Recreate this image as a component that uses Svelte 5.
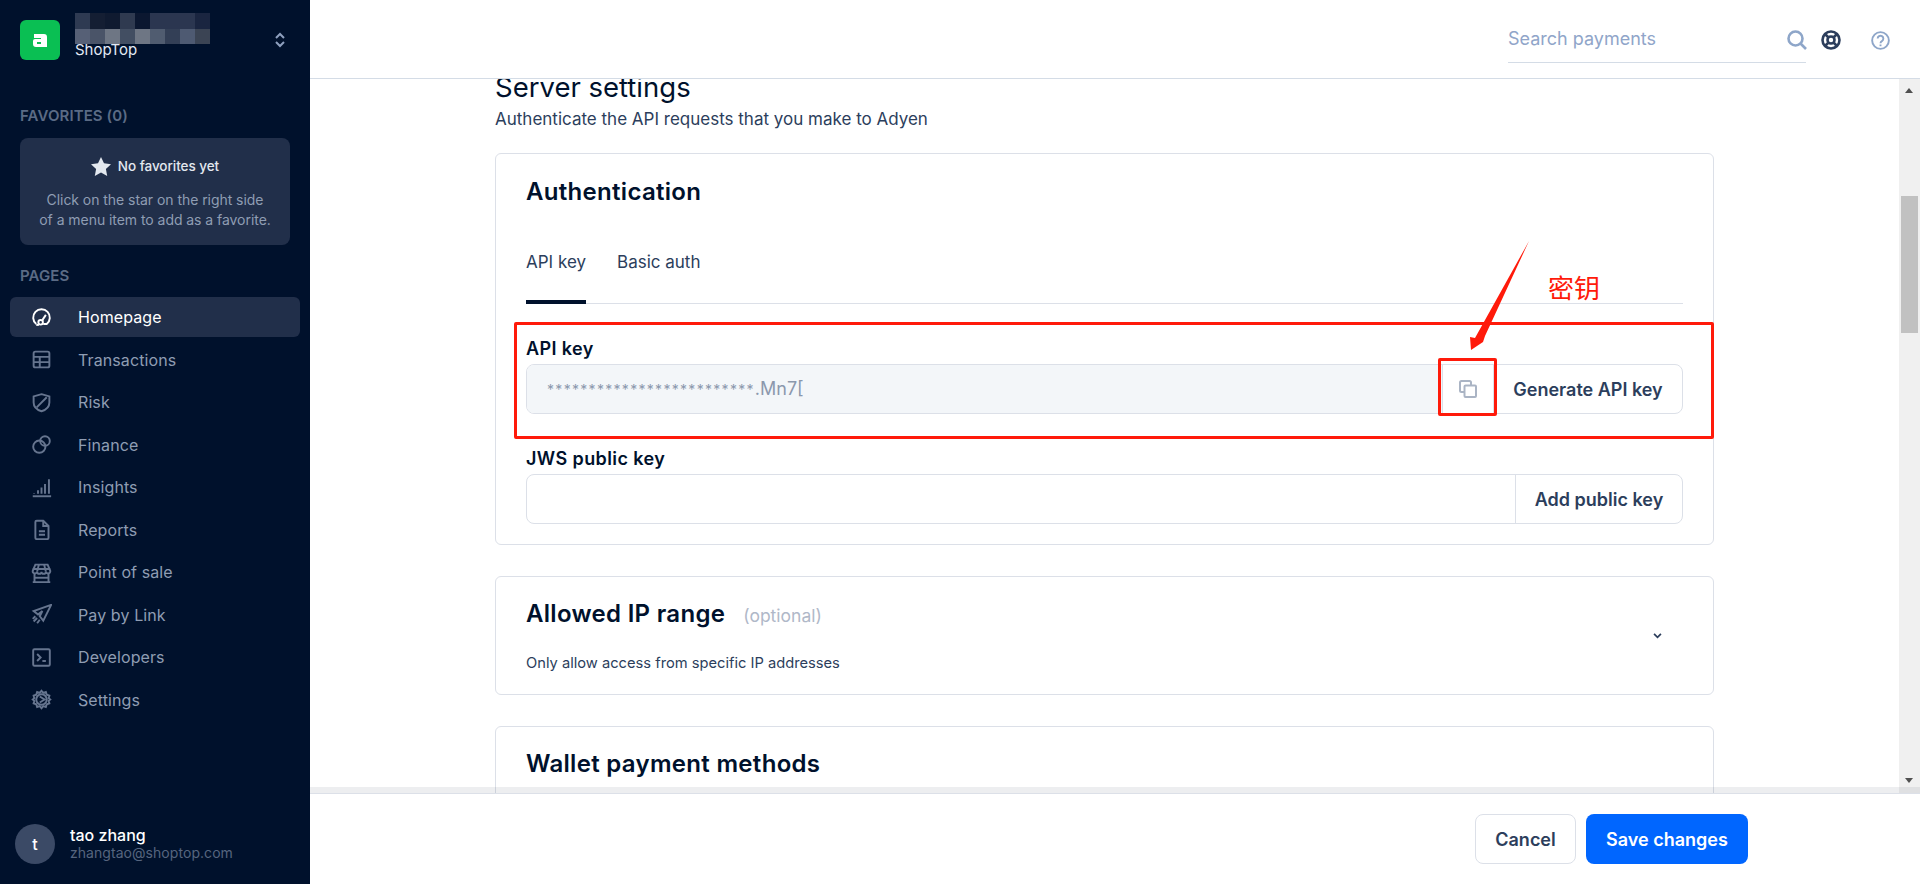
<script>
    const blurRows = [
        ['#2e3a52', '#141e33', '#0f1a30', '#2f3a50', '#0b1730', '#2b3650', '#2b3650', '#2b3650', '#1a2540'],
        ['#566076', '#4a5468', '#6e7684', '#424e62', '#6e7684', '#505c70', '#333f56', '#4e5a72', '#3b4454']
    ];

    const pages = [
        { label: 'Homepage', active: true, paths: ['M6 19.500A9.500 9.500 0 1 1 18 19.500H14', 'M9 20.500H6', 'M13 15l4-6'], dots: [[11, 17.500, 2.600]] },
        { label: 'Transactions', paths: ['M5 3h14a2 2 0 0 1 2 2v14a2 2 0 0 1-2 2H5a2 2 0 0 1-2-2V5a2 2 0 0 1 2-2z', 'M3 9h18M3 15h18M10 9v12'] },
        { label: 'Risk', paths: ['M12 2.500l9 2.500v7c0 5-4 8.500-9 10-5-1.500-9-5-9-10V5z', 'M6.500 17.500L18 6'] },
        { label: 'Finance', paths: [], dots: [[9.500, 14.500, 7], [16, 8, 5.500]] },
        { label: 'Insights', paths: ['M2 22h21', 'M3.500 19v-.5M8 19v-4M12 19v-7M16 19V8M20.500 19V2.500'] },
        { label: 'Reports', paths: ['M5 3.500A1.500 1.500 0 0 1 6.500 2H14l6 6v13.500a1.500 1.500 0 0 1-1.500 1.500h-12A1.500 1.500 0 0 1 5 21.500z', 'M14 2v6h6', 'M9 14h7M9 18h7'] },
        { label: 'Point of sale', paths: ['M5 3h14l3 7a2.500 2.500 0 0 1-5 1 2.500 2.500 0 0 1-5 0 2.500 2.500 0 0 1-5 0 2.500 2.500 0 0 1-5-1z', 'M9 3L7 11M15 3l2 8M2 8h20', 'M4 13v10M20 13v10M2 23h20', 'M4 18h16'] },
        { label: 'Pay by Link', paths: ['M23 1L3 8l5 4 5-4-3 6 4 5z', 'M7 16l-4 4M5 14l-3 3M10 18l-3 4'] },
        { label: 'Developers', paths: ['M4 2.500h16a1.500 1.500 0 0 1 1.500 1.500v16a1.500 1.500 0 0 1-1.500 1.500H4A1.500 1.500 0 0 1 2.500 20V4A1.500 1.500 0 0 1 4 2.500z', 'M7 8l4 4-4 4', 'M13 16h4'] },
        { label: 'Settings', paths: ['M12 2l2 2.500 3-1 1 3 3 1-.8 3L22 12l-1.800 1.500.8 3-3 1-1 3-3-1L12 22l-2-2.500-3 1-1-3-3-1 .8-3L2 12l1.800-1.500-.8-3 3-1 1-3 3 1z', 'M10 8.500l5.500 3.500-5.500 3.500'], dots: [[12, 12, 6]] }
    ];
</script>

<div class="page">
    <aside class="sidebar">
        <div class="account">
            <div class="logo">
                <svg viewBox="0 0 14 13" width="14" height="13"><path fill="#fff" fill-rule="evenodd" d="M1 0h10a3 3 0 0 1 3 3v10H3a3 3 0 0 1-3-3V7a2 2 0 0 1 2-2h6V4H1zM4 8v2h4V8z" /></svg>
            </div>
            <div class="account__text">
                <div class="blur">
                    {#each blurRows as row}
                        <div class="blur__row">
                            {#each row as c}
                                <span style="background:{c}"></span>
                            {/each}
                        </div>
                    {/each}
                </div>
                <div class="account__name">ShopTop</div>
            </div>
            <svg class="updown" viewBox="0 0 12 16" width="12" height="16" fill="none" stroke="#8ea0bf" stroke-width="2"><path d="M2 6l4-4 4 4M2 10l4 4 4-4" /></svg>
        </div>

        <div class="heading">FAVORITES (0)</div>
        <div class="favs">
            <div class="favs__title">
                <svg viewBox="0 0 20 19" width="20" height="19"><path fill="#e3e8ef" d="M10 0l3 6.300 7 .9-5.100 4.800 1.300 7L10 15.600 3.800 19l1.300-7L0 7.200l7-.9z" /></svg>
                No favorites yet
            </div>
            <p>Click on the star on the right side<br />of a menu item to add as a favorite.</p>
        </div>

        <div class="heading heading_pages">PAGES</div>
        <nav class="nav">
            {#each pages as page}
                <div class="nav__item" class:nav__item_active={page.active}>
                    <svg class="nav__icon" viewBox="0 0 24 24" width="21" height="21" fill="none" stroke="currentColor" stroke-width="2.200">
                        {#each page.paths as d}
                            <path {d} />
                        {/each}
                        {#each page.dots || [] as dot}
                            <circle cx={dot[0]} cy={dot[1]} r={dot[2]} />
                        {/each}
                    </svg>
                    {page.label}
                </div>
            {/each}
        </nav>

        <div class="user">
            <div class="avatar">t</div>
            <div>
                <div class="user__name">tao zhang</div>
                <div class="user__mail">zhangtao@shoptop.com</div>
            </div>
        </div>
    </aside>

    <div class="main">
        <header class="topbar">
            <div class="search">
                <span>Search payments</span>
                <svg viewBox="0 0 20 20" width="20" height="20" fill="none" stroke="#8ea6c9" stroke-width="2.600"><circle cx="8.500" cy="8.500" r="7" /><path d="M13.500 13.500l5.500 5.500" /></svg>
            </div>
            <svg class="lifebuoy" viewBox="0 0 20 20" width="20" height="20" fill="none" stroke="#2c3e5c" stroke-width="2.600"><circle cx="10" cy="10" r="8.500" /><circle cx="10" cy="10" r="3.500" /><path d="M4 4l3.500 3.500M16 4l-3.500 3.500M4 16l3.500-3.500M16 16l-3.500-3.500" /></svg>
            <svg class="help" viewBox="0 0 20 20" width="19" height="19" fill="none" stroke="#8ea6c9" stroke-width="2"><circle cx="10" cy="10" r="8.800" /><path d="M7 8a3 3 0 1 1 4.500 2.600c-1 .6-1.500 1-1.500 2.200" /><path d="M10 14.200v1.800" /></svg>
        </header>

        <div class="content">
            <div class="scroll">
                <h1>Server settings</h1>
                <p class="subtitle">Authenticate the API requests that you make to Adyen</p>

                <section class="card card_auth">
                    <h2>Authentication</h2>
                    <div class="tabs">
                        <div class="tab tab_active">API key</div>
                        <div class="tab">Basic auth</div>
                    </div>
                    <label class="field__label" for="api-key">API key</label>
                    <div class="field">
                        <div id="api-key" class="field__input field__input_disabled"><span class="stars">*************************</span>.Mn7[</div>
                        <div class="field__btn field__btn_icon">
                            <svg viewBox="0 0 18 18" width="18" height="18" fill="none" stroke="#aab4c4" stroke-width="2"><path d="M5 12H2.500A1.500 1.500 0 0 1 1 10.500V2.500A1.500 1.500 0 0 1 2.500 1h8A1.500 1.500 0 0 1 12 2.500V5" /><rect x="5.500" y="5.500" width="11.500" height="11.500" rx="1" /></svg>
                        </div>
                        <div class="field__btn field__btn_generate">Generate API key</div>
                    </div>
                    <label class="field__label field__label_jws" for="jws-key">JWS public key</label>
                    <div class="field">
                        <div id="jws-key" class="field__input"></div>
                        <div class="field__btn field__btn_add">Add public key</div>
                    </div>
                </section>

                <section class="card card_ip">
                    <div class="card__head">
                        <h2>Allowed IP range</h2>
                        <span class="optional">(optional)</span>
                    </div>
                    <p class="hint">Only allow access from specific IP addresses</p>
                    <svg class="chevron" viewBox="0 0 10 7" width="9" height="6" fill="none" stroke="#2c3e5c" stroke-width="2"><path d="M1 1l4 4 4-4" /></svg>
                </section>

                <section class="card card_wallet">
                    <h2>Wallet payment methods</h2>
                </section>
            </div>
            <div class="scrollbar">
                <span class="arrow arrow_up"></span>
                <span class="thumb"></span>
                <span class="arrow arrow_down"></span>
            </div>
            <div class="edge"></div>
        </div>

        <footer class="footer">
            <div class="btn">Cancel</div>
            <div class="btn btn_primary">Save changes</div>
        </footer>
    </div>

    <!-- red marks drawn on top of the screenshot -->
    <div class="mark mark_big"></div>
    <div class="mark mark_small"></div>
    <svg class="mark__arrow" viewBox="0 0 70 115" width="70" height="115"><path fill="#ff1a0a" d="M64 1L20 96l-2 6L6 110 5 97l5 1z" /></svg>
    <div class="mark__label">密钥</div>
</div>

<style>
    :global(body) {
        margin: 0;
        background: #fff;
    }
    * {
        box-sizing: border-box;
    }
    .page {
        position: relative;
        display: flex;
        height: 884px;
        overflow: hidden;
        font-family: Inter, "Noto Sans CJK SC", sans-serif;
        font-size: 16px;
        color: #00112c;
    }
    .sidebar {
        display: flex;
        flex-direction: column;
        flex: none;
        width: 310px;
        background: #00112c;
        color: #8f9db3;
    }
    .account {
        display: flex;
        align-items: flex-start;
        height: 100px;
        padding: 20px 24px 0 20px;
    }
    .logo {
        display: flex;
        align-items: center;
        justify-content: center;
        flex: none;
        width: 40px;
        height: 40px;
        border-radius: 6px;
        background: #0abf53;
    }
    .account__text {
        flex: 1;
        margin: -7px 0 0 15px;
    }
    .blur__row {
        display: flex;
        height: 15.500px;
    }
    .blur__row span {
        width: 15px;
    }
    .account__name {
        margin-top: -3px;
        font-size: 15px;
        line-height: 17px;
        color: #e3eaf5;
    }
    .updown {
        margin-top: 12px;
    }
    .heading {
        height: 38px;
        padding: 7px 0 0 20px;
        font-size: 15px;
        line-height: 17px;
        font-weight: 600;
        letter-spacing: .1px;
        color: #5b6b85;
    }
    .heading_pages {
        height: 30px;
        padding-top: 0;
    }
    .favs {
        height: 107px;
        margin: 0 20px 22px;
        padding-top: 18px;
        border-radius: 8px;
        background: #212f4a;
        text-align: center;
        font-size: 14px;
        letter-spacing: -.05px;
    }
    .favs__title {
        display: flex;
        align-items: center;
        justify-content: center;
        gap: 7px;
        height: 20px;
        font-size: 13.500px;
        font-weight: 500;
        color: #e3e8ef;
    }
    .favs p {
        margin: 14px 0 0;
        line-height: 20px;
    }
    .nav {
        display: flex;
        flex-direction: column;
        gap: 2.500px;
        margin: 0 10px;
    }
    .nav__item {
        display: flex;
        align-items: center;
        height: 40px;
        padding-left: 21px;
        border-radius: 6px;
        letter-spacing: .1px;
    }
    .nav__icon {
        flex: none;
        margin-right: 26px;
        color: #66758f;
    }
    .nav__item_active {
        background: #212f4a;
        color: #fff;
    }
    .nav__item_active .nav__icon {
        color: #fff;
    }
    .user {
        display: flex;
        align-items: center;
        gap: 15px;
        margin-top: auto;
        padding: 0 0 20px 15px;
    }
    .avatar {
        display: flex;
        align-items: center;
        justify-content: center;
        width: 40px;
        height: 40px;
        border-radius: 50%;
        background: #3b4a66;
        color: #fff;
        font-weight: 500;
    }
    .user__name {
        font-size: 16px;
        line-height: 18px;
        font-weight: 500;
        color: #fff;
    }
    .user__mail {
        font-size: 14px;
        line-height: 18px;
        letter-spacing: .05px;
        color: #56657f;
    }
    .main {
        display: flex;
        flex-direction: column;
        flex: 1;
        min-width: 0;
    }
    .topbar {
        display: flex;
        align-items: flex-start;
        flex: none;
        height: 79px;
        padding: 29px 30px 0 0;
        border-bottom: 1px solid #d4dce6;
    }
    .search {
        display: flex;
        justify-content: space-between;
        width: 298px;
        height: 34px;
        margin-left: auto;
        border-bottom: 1px solid #d4dce6;
        font-size: 18px;
        color: #90a5c9;
    }
    .search span {
        line-height: 20px;
    }
    .search svg {
        margin: 1px -1px 0 0;
    }
    .lifebuoy {
        margin: 1px 0 0 15px;
    }
    .help {
        margin: 2px 0 0 30px;
    }
    .content {
        position: relative;
        display: flex;
        flex: 1;
        min-height: 0;
        overflow: hidden;
    }
    .scroll {
        flex: 1;
        min-width: 0;
        margin-top: -8px;
        padding: 0 185px 0 185px;
    }
    h1 {
        margin: 0;
        font-size: 27.500px;
        line-height: 32px;
        font-weight: 400;
    }
    .subtitle {
        margin: 6px 0 24px;
        font-size: 17px;
        line-height: 20px;
        color: #2c3e5c;
    }
    .card {
        position: relative;
        margin-bottom: 31px;
        padding: 0 30px;
        border: 1px solid #dce0e8;
        border-radius: 6px;
    }
    .card_auth {
        height: 392px;
        padding-top: 24px;
    }
    .card_ip {
        height: 119px;
        padding-top: 23px;
    }
    .card_wallet {
        height: 120px;
        padding-top: 23px;
    }
    h2 {
        margin: 0;
        font-size: 24px;
        line-height: 28px;
        font-weight: 600;
        letter-spacing: .3px;
    }
    .tabs {
        display: flex;
        gap: 31px;
        height: 68px;
        margin-top: 30px;
        padding-top: 16px;
        border-bottom: 1px solid #dce0e8;
    }
    .tab {
        height: 52px;
        font-size: 17px;
        line-height: 20px;
        color: #2c3e5c;
    }
    .tab_active {
        border-bottom: 4px solid #00112c;
    }
    .field__label {
        display: block;
        margin-top: 35px;
        font-size: 18px;
        font-weight: 600;
        line-height: 20px;
        letter-spacing: .4px;
    }
    .field {
        display: flex;
        height: 50px;
        margin-top: 5px;
        border: 1px solid #dce0e8;
        border-radius: 8px;
        overflow: hidden;
    }
    .field__input {
        flex: 1;
        padding: 0 20px;
        line-height: 48px;
    }
    .field__input_disabled {
        background: #f3f6f9;
        color: #8b98ad;
        font-size: 18px;
    }
    .stars {
        font-size: 14px;
        letter-spacing: 1.300px;
    }
    .field__btn {
        display: flex;
        align-items: center;
        justify-content: center;
        flex: none;
        border-left: 1px solid #dce0e8;
        font-size: 18px;
        font-weight: 600;
        color: #2c3e5c;
    }
    .field__btn_icon {
        width: 51px;
    }
    .field__btn_generate {
        width: 189px;
    }
    .field__btn_add {
        width: 167px;
    }
    .card__head {
        display: flex;
        align-items: baseline;
        gap: 18px;
    }
    .optional {
        font-size: 17.500px;
        color: #b0b8c8;
    }
    .hint {
        margin: 25px 0 0;
        font-size: 14.700px;
        line-height: 20px;
        color: #2c3e5c;
    }
    .chevron {
        position: absolute;
        top: 56px;
        right: 51px;
    }
    .scrollbar {
        position: relative;
        flex: none;
        width: 21px;
        background: #f0f0f0;
    }
    .thumb {
        position: absolute;
        top: 117px;
        left: 2px;
        width: 17px;
        height: 137px;
        background: #c1c1c1;
    }
    .arrow {
        position: absolute;
        left: 6px;
        border-left: 4.500px solid transparent;
        border-right: 4.500px solid transparent;
    }
    .arrow_up {
        top: 9px;
        border-bottom: 5px solid #505050;
    }
    .arrow_down {
        bottom: 10px;
        border-top: 5px solid #505050;
    }
    .edge {
        position: absolute;
        left: 0;
        right: 0;
        bottom: 0;
        height: 6px;
        background: rgba(0, 17, 44, .07);
    }
    .footer {
        display: flex;
        justify-content: flex-end;
        gap: 10px;
        flex: none;
        height: 91px;
        padding: 20px 172px 0 0;
        border-top: 1px solid #dce0e8;
    }
    .btn {
        display: flex;
        align-items: center;
        justify-content: center;
        width: 101px;
        height: 50px;
        border: 1px solid #dce0e8;
        border-radius: 8px;
        font-size: 18px;
        font-weight: 600;
        color: #2c3e5c;
    }
    .btn_primary {
        width: 162px;
        border: 0;
        background: #0066ff;
        color: #fff;
    }
    .mark {
        position: absolute;
        border: 3px solid #ff1a0a;
        border-radius: 2px;
        pointer-events: none;
    }
    .mark_big {
        left: 514px;
        top: 322px;
        width: 1200px;
        height: 117px;
    }
    .mark_small {
        left: 1438px;
        top: 358px;
        width: 59px;
        height: 58px;
    }
    .mark__arrow {
        position: absolute;
        left: 1465px;
        top: 240px;
    }
    .mark__label {
        position: absolute;
        left: 1548px;
        top: 271px;
        font-size: 26px;
        line-height: 36px;
        color: #ff1a0a;
    }
</style>
